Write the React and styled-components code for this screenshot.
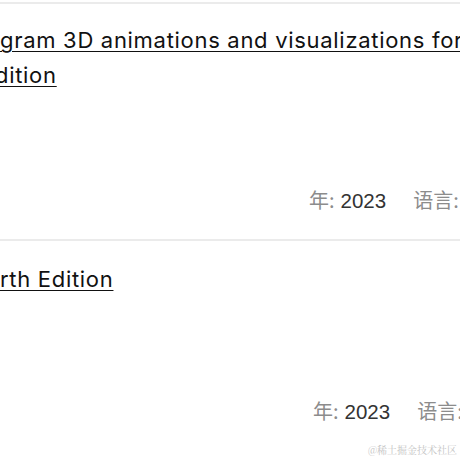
import React from "react";
import styled, { createGlobalStyle } from "styled-components";

const Global = createGlobalStyle`
  html, body { margin: 0; padding: 0; background: #fff; }
  body { width: 460px; height: 460px; overflow: hidden; }
  #root { width: 460px; height: 460px; }
`;

const Page = styled.div`
  position: relative;
  width: 460px;
  height: 460px;
  overflow: hidden;
  padding-top: 2px;
  box-sizing: border-box;
`;

const Item = styled.article`
  border-top: 2px solid #ebebeb;
  padding: ${(p) => p.$top}px 0 24px;
  display: flex;
  flex-direction: column;
`;

const Title = styled.a`
  display: block;
  font-family: Inter, "Noto Sans", sans-serif;
  font-size: 22px;
  letter-spacing: 0.7px;
  line-height: 35px;
  color: #111;
  text-decoration: underline;
  text-decoration-thickness: 1px;
  text-underline-offset: 3px;
  text-decoration-skip-ink: auto;
  white-space: nowrap;
`;

const Line = styled.span`
  display: block;
  margin-left: ${(p) => p.$shift || 0}px;
`;

const Body = styled.div`
  height: ${(p) => p.$space}px;
`;

const Meta = styled.div`
  display: flex;
  align-items: center;
  padding-left: ${(p) => p.$offset}px;
  font-family: "Liberation Sans", "Noto Sans CJK SC", sans-serif;
  font-size: 20.5px;
  line-height: 28px;
  white-space: nowrap;
  gap: 27px;
`;

const Field = styled.span`
  display: inline-flex;
  align-items: baseline;
  gap: 6px;
`;

const Label = styled.span`
  font-family: "Noto Sans CJK SC", sans-serif;
  font-size: 20px;
  color: #8c8c8c;
`;

const Value = styled.span`
  color: #333;
`;

const Watermark = styled.div`
  position: absolute;
  right: 3px;
  bottom: 3px;
  font-family: "Noto Serif CJK SC", "Noto Sans CJK SC", serif;
  font-size: 10px;
  color: #c4c4c4;
`;

const books = [
  {
    lines: [
      { text: "gram 3D animations and visualizations for the web", shift: 0 },
      { text: "dition", shift: -5 },
    ],
    top: 19,
    space: 93,
    offset: 309,
  },
  { lines: [{ text: "rth Edition", shift: 0 }], top: 21, space: 100, offset: 313 },
];

export default function App() {
  return (
    <>
      <Global />
      <Page>
        {books.map((b, i) => (
          <Item key={i} $top={b.top}>
            <Title href="#">
              {b.lines.map((l, j) => (
                <Line key={j} $shift={l.shift}>
                  {l.text}
                </Line>
              ))}
            </Title>
            <Body $space={b.space} />
            <Meta $offset={b.offset}>
              <Field>
                <Label>年:</Label>
                <Value>2023</Value>
              </Field>
              <Field>
                <Label>语言:</Label>
                <Value>English</Value>
              </Field>
            </Meta>
          </Item>
        ))}
        <Watermark>@稀土掘金技术社区</Watermark>
      </Page>
    </>
  );
}
